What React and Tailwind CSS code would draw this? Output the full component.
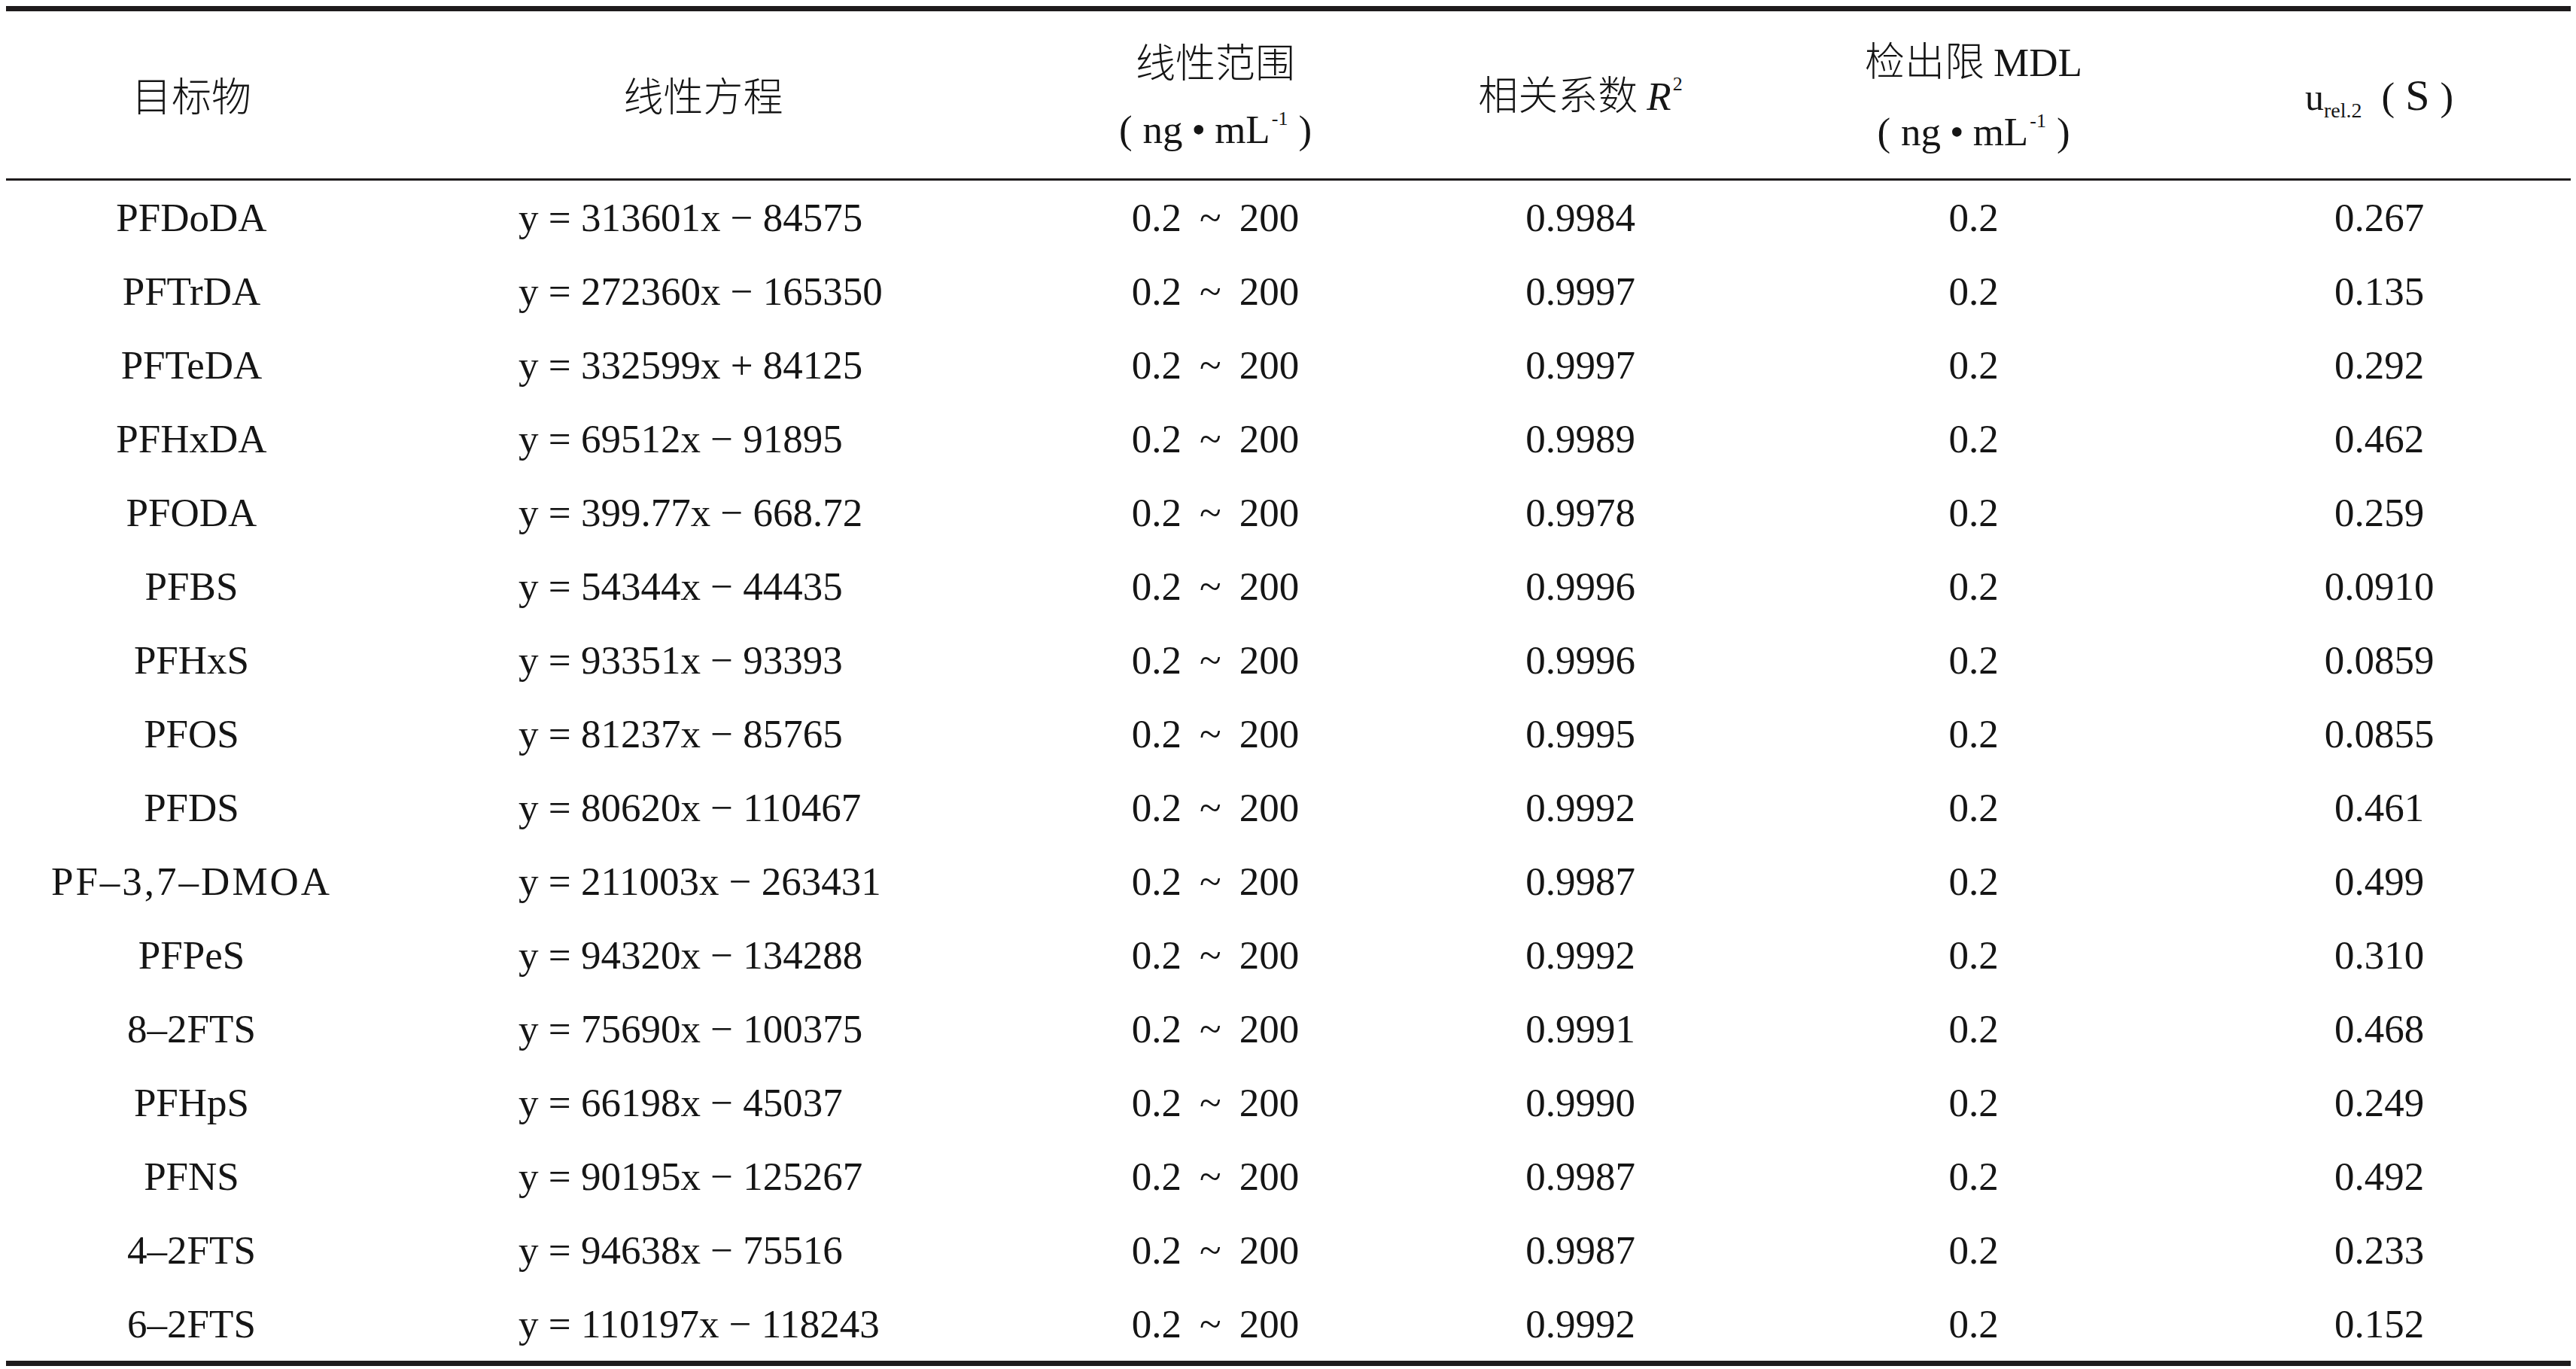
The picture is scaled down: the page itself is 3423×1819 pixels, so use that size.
import React from "react";

const rows = [
  ["PFDoDA", "y = 313601x − 84575", "0.9984", "0.267"],
  ["PFTrDA", "y = 272360x − 165350", "0.9997", "0.135"],
  ["PFTeDA", "y = 332599x + 84125", "0.9997", "0.292"],
  ["PFHxDA", "y = 69512x − 91895", "0.9989", "0.462"],
  ["PFODA", "y = 399.77x − 668.72", "0.9978", "0.259"],
  ["PFBS", "y = 54344x − 44435", "0.9996", "0.0910"],
  ["PFHxS", "y = 93351x − 93393", "0.9996", "0.0859"],
  ["PFOS", "y = 81237x − 85765", "0.9995", "0.0855"],
  ["PFDS", "y = 80620x − 110467", "0.9992", "0.461"],
  ["PF–3,7–DMOA", "y = 211003x − 263431", "0.9987", "0.499"],
  ["PFPeS", "y = 94320x − 134288", "0.9992", "0.310"],
  ["8–2FTS", "y = 75690x − 100375", "0.9991", "0.468"],
  ["PFHpS", "y = 66198x − 45037", "0.9990", "0.249"],
  ["PFNS", "y = 90195x − 125267", "0.9987", "0.492"],
  ["4–2FTS", "y = 94638x − 75516", "0.9987", "0.233"],
  ["6–2FTS", "y = 110197x − 118243", "0.9992", "0.152"],
];

const cols = "grid grid-cols-[493px_867px_494px_476px_569px_509px]";
const zh = "font-['Noto_Sans_CJK_SC',sans-serif] font-light";

function Unit() {
  return (
    <span className="whitespace-nowrap">
      (<span className="ml-[14px]">ng</span>
      <span className="mx-[12px]">•</span>
      mL<span className="inline-block align-baseline text-[26px] leading-none relative top-[-24px] ml-[2px]">-1</span>
      <span className="ml-[14px]">)</span>
    </span>
  );
}

export default function App() {
  return (
    <div className="bg-white min-h-screen pt-[8px] pl-[8px] text-[#151515] font-['Liberation_Serif','Noto_Sans_CJK_SC',serif] text-[53px]">
      <div className="w-[3408px]">
        <div className="h-[7px] bg-[#1e1b1c]" />
        <div className={`${cols} h-[222px]`}>
          <div className="flex items-center justify-center">
            <span className={zh}>目标物</span>
          </div>
          <div className="flex items-center justify-center">
            <span className={zh}>线性方程</span>
          </div>
          <div className="flex flex-col items-center justify-center leading-[92px]">
            <span className={zh}>线性范围</span>
            <Unit />
          </div>
          <div className="flex items-center justify-center">
            <span className="whitespace-nowrap">
              <span className={zh}>相关系数</span>
              <span className="ml-[12px] italic">R</span>
              <span className="inline-block align-baseline text-[26px] leading-none relative top-[-26px] ml-[2px]">2</span>
            </span>
          </div>
          <div className="flex flex-col items-center justify-center leading-[92px]">
            <span>
              <span className={zh}>检出限</span>
              <span className="ml-[12px]">MDL</span>
            </span>
            <Unit />
          </div>
          <div className="flex items-center justify-center">
            <span className="whitespace-nowrap">
              <span className="text-[50px]">u</span>
              <span className="inline-block align-baseline text-[28px] leading-none relative top-[10px]">rel.2</span>
              <span className="ml-[26px]">(</span>
              <span className="mx-[14px] text-[58px]">S</span>
              <span>)</span>
            </span>
          </div>
        </div>
        <div className="h-[3px] bg-[#1e1b1c]" />
        {rows.map((r, i) => (
          <div key={i} className={`${cols} h-[98px] leading-none`}>
            <div className="flex items-center justify-center">
              <span className={r[0].includes(",") ? "tracking-[3px]" : ""}>{r[0]}</span>
            </div>
            <div className="flex items-center pl-[188px] whitespace-nowrap">{r[1]}</div>
            <div className="flex items-center justify-center whitespace-nowrap">
              0.2<span className="mx-[24px]">~</span>200
            </div>
            <div className="flex items-center justify-center">{r[2]}</div>
            <div className="flex items-center justify-center">0.2</div>
            <div className="flex items-center justify-center">{r[3]}</div>
          </div>
        ))}
        <div className="h-[7px] bg-[#1e1b1c]" />
      </div>
    </div>
  );
}
